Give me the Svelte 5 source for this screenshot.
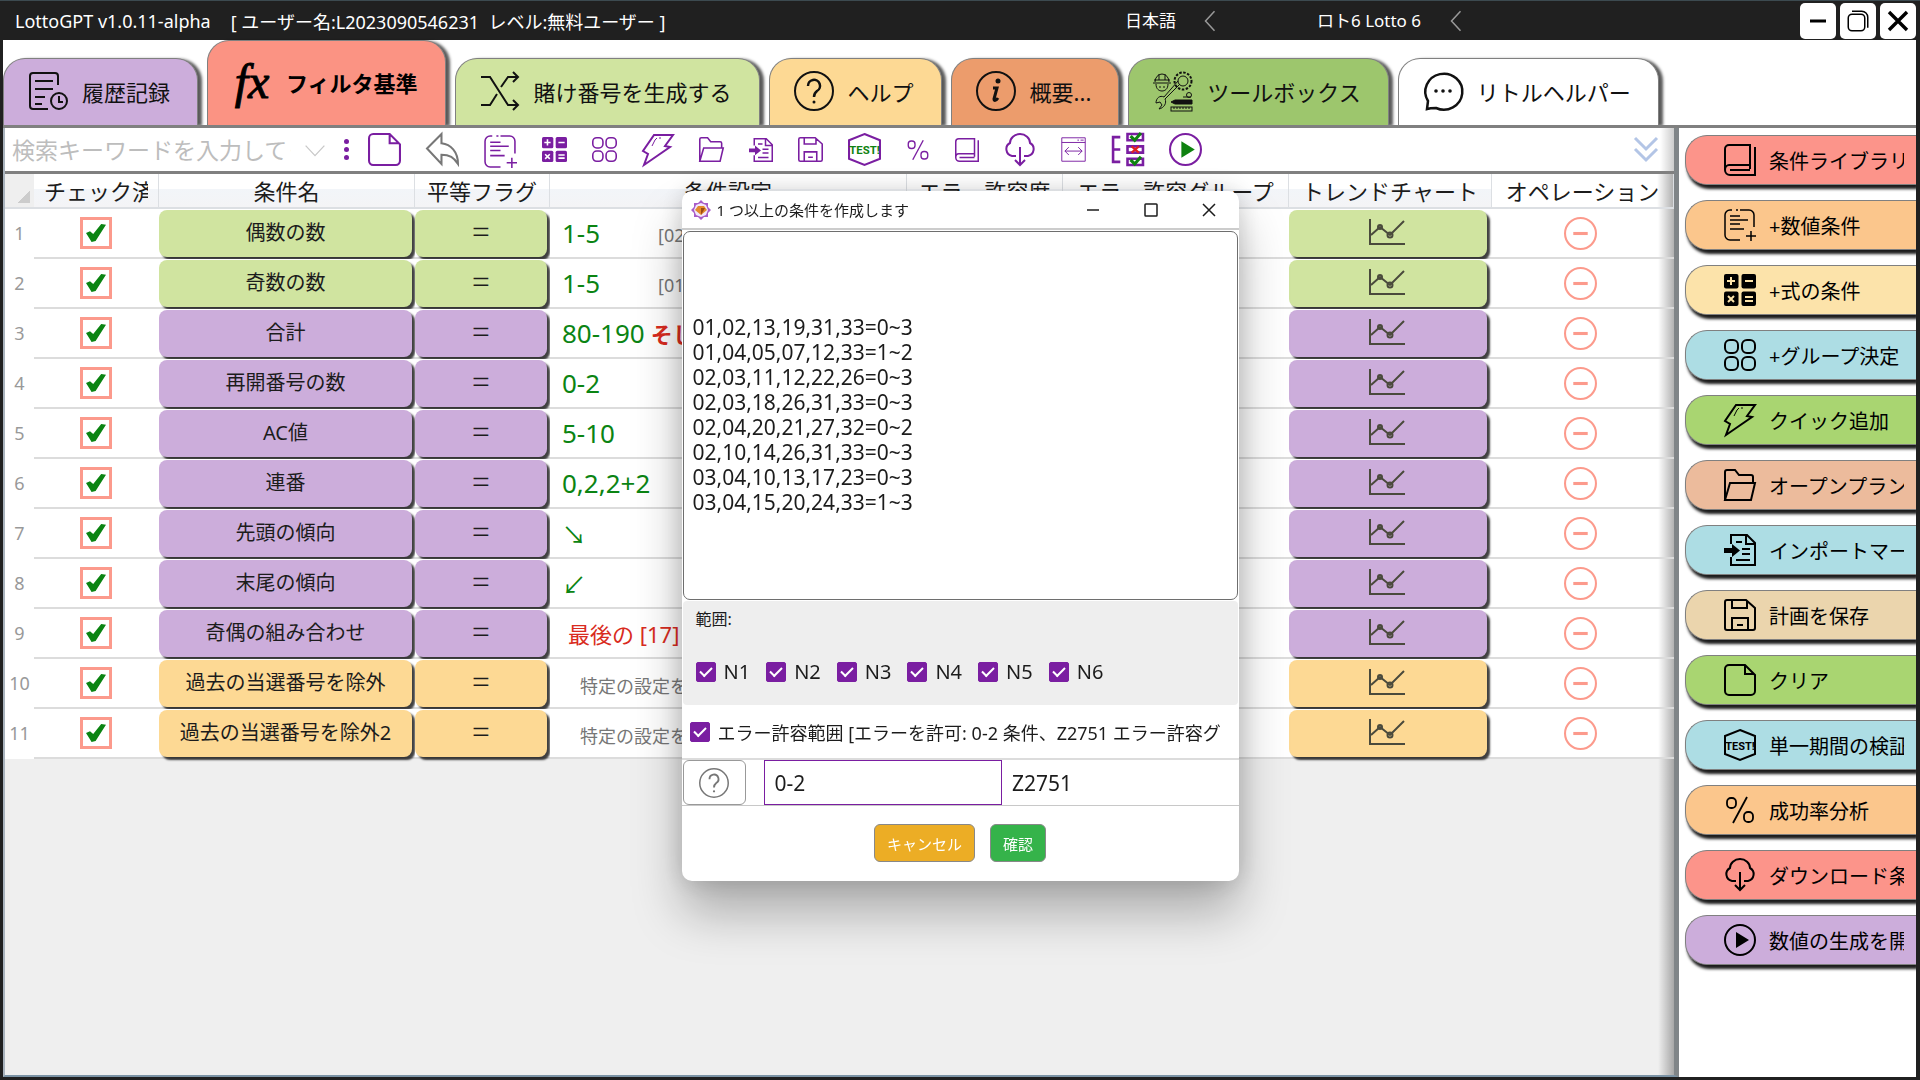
<script lang="ts">
  const icons: Record<string, string> = {
    history: `<path d="M30 14V5a3 3 0 0 0-3-3H5a3 3 0 0 0-3 3v30a3 3 0 0 0 3 3h15M7 10h18M7 18h18M7 26h10M7 33h7"/><circle cx="31" cy="30" r="8"/><path d="M31 25v6h4"/>`,
    shuffle: `<path d="M1 6h9l18 28h10M33 29l5 5-5 5M1 34h9l7-11M21 16l7-10h10M33 1l5 5-5 5"/>`,
    help: `<circle cx="20" cy="20" r="19"/><path d="M14 15a6 6 0 1 1 9 5c-2 1.5-3 3-3 6" stroke-width="2.5"/><circle cx="20" cy="31" r="1.5" fill="currentColor" stroke="none"/>`,
    info: `<circle cx="20" cy="20" r="19"/><path d="M17 17h4l-3 11c0 2 2 2 4-1" stroke-width="3"/><circle cx="22" cy="10" r="2.5" fill="currentColor" stroke="none"/>`,
    chat: `<path d="M4 38l1-8a18.500 18 0 1 1 8 7c-3 0-6 0-9 1z" stroke-width="2.5"/><g fill="currentColor" stroke="none"><circle cx="13" cy="20" r="1.8"/><circle cx="20" cy="20" r="1.8"/><circle cx="27" cy="20" r="1.8"/></g>`,
    tools: `<g stroke-width="1"><path d="M2 11a7 8 0 0 1 14 0M0 12h18M1 9h16M6 3v6M12 3v6M3 13c0 5 3 7 6 7s6-2 6-7M6 16h2M10 16h2"/><circle cx="30" cy="10" r="5"/><circle cx="30" cy="10" r="8.5" stroke-width="2" stroke-dasharray="2.5 1.5"/><path d="M27 13L12 28c2 4-1 9-6 10l3-4-2-3-4 1c0-5 4-8 8-6L25 10"/><rect x="18" y="36" width="21" height="4"/><path d="M21 36v2M24 36v2M27 36v2M30 36v2M33 36v2M36 36v2M30 26h8"/><circle cx="36" cy="24" r="2.500"/><path d="M18 31l4-2h17v4H22z" fill="currentColor"/></g>`,
    file: `<path d="M5 1h16l10 10v16a4 4 0 0 1-4 4H5a4 4 0 0 1-4-4V5a4 4 0 0 1 4-4zM21 1v9h9"/>`,
    undo: `<path d="M1 15L15 1v9c9 1 16 8 16 20-4-6-8-9-16-9v9z"/>`,
    note: `<g stroke-width="1.5"><path d="M12 1h2M16 1h9a5 5 0 0 1 5 5v12M8 1H6a5 5 0 0 0-5 5v20a5 5 0 0 0 5 5h10M6 7h10M6 11h18M6 15h10M6 20h14M27 22v10M22 27h10"/></g>`,
    calc: `<g fill="currentColor" stroke="none"><rect width="14.5" height="14.5" rx="2"/><rect x="17.5" width="14.5" height="14.5" rx="2"/><rect y="17.5" width="14.5" height="14.5" rx="2"/><rect x="17.5" y="17.5" width="14.5" height="14.5" rx="2"/></g><path stroke="var(--hole, #fff)" d="M3 7h8M7 3v8M21 7h8M4 22l6 6M10 22l-6 6M21 23h8M21 27h8"/>`,
    group: `<rect x="1" y="1" width="13" height="13" rx="5"/><rect x="18" y="1" width="13" height="13" rx="5"/><rect x="1" y="18" width="13" height="13" rx="5"/><rect x="18" y="18" width="13" height="13" rx="5"/>`,
    bolt: `<path d="M12 1h19l-8 11 5 1L2 31l4-11-5-3z"/><path d="M19 4h-2M15 4l-2 2-3 6" stroke-width="1"/>`,
    folder: `<path d="M1 31V3a2 2 0 0 1 2-2h8l4 5h12a2 2 0 0 1 2 2v6M1 31l5-17h25l-4 17z"/>`,
    input: `<path d="M7 10V1h16l8 8v22H7v-8M22 1v9h9M12 8h6M18 15h8M18 20h8M12 26h14"/><path d="M0 14h8v-4l8 6.5-8 6.5v-4H0z" fill="currentColor" stroke="none"/>`,
    save: `<path d="M3 1h19l9 8v20a2 2 0 0 1-2 2H3a2 2 0 0 1-2-2V3a2 2 0 0 1 2-2zM8 1v8h15V2M8 31V19h16v12M13 26h6"/>`,
    test: `<path d="M16 1l15 6v18l-15 6-15-6V7z"/><text x="16" y="20.5" text-anchor="middle" font-family="Liberation Sans Narrow, Roboto, sans-serif" font-size="11" font-weight="700" fill="var(--accent, currentColor)" stroke="none">TEST!</text>`,
    percent: `<g stroke-width="1.8"><rect x="3" y="4" width="9" height="10" rx="4"/><rect x="20" y="18" width="9" height="10" rx="4"/><path d="M23 3L9 29"/></g>`,
    book: `<path d="M5 1h21v20H5c-2 0-4 2-4 5V5a4 4 0 0 1 4-4zM1 26a5 5 0 0 0 5 5h25V3M6 26h20M26 21v4"/>`,
    cloud: `<path d="M12 22H8a7 7 0 0 1-2-13 10 9 0 0 1 20 0 7 7 0 0 1-2 13h-4M16 13v18M11 26l5 5 5-5"/>`,
    width: `<g stroke-width="1.2"><path d="M1 1h30v30H1zM1 7h30M21 4h2M25 4h4M5 18h22M10 13l-5 5 5 5M22 13l5 5-5 5"/></g>`,
    checklist: `<path d="M9 4H2v24h7M2 16h7" stroke-width="2.5"/><path d="M16 1h15v6H16zM16 13h15v6H16zM16 25h15v6H16z" stroke-width="2.5"/><path d="M19 3l4 4 6-7M19 26l4 4 6-7" stroke="#0f8210" stroke-width="3"/><path d="M20 13l7 6M27 13l-7 6" stroke="#e02020"/>`,
    play: `<circle cx="16" cy="16" r="15"/><path d="M12 8l13 8-13 8z" fill="var(--accent, currentColor)" stroke="none"/>`,
    chart: `<path d="M1 2v25h35M2 18l9-8 10 8 14-14"/><circle cx="11" cy="10" r="2"/><circle cx="21" cy="18" r="2.5"/>`,
    minus: `<circle cx="16" cy="16" r="15"/><path d="M9 16h14" stroke-width="3"/>`,
    down: `<path d="M1 9l15 16L31 9"/>`,
    left: `<path d="M22 3L10 16l12 13"/>`,
    chevrons: `<path d="M5 4l11 11L27 4M5 15l11 11 11-11" stroke-width="3"/>`,
    line: `<path d="M8 16h16"/>`,
    square: `<rect x="8" y="8" width="16" height="16" rx="1"/>`,
    copy: `<rect x="3" y="7" width="22" height="22" rx="5"/><path d="M8 3h13a8 8 0 0 1 8 8v14"/>`,
    close: `<path d="M8 8l16 16M24 8L8 24"/>`,
  };

  const tabs = [
    { label: "履歴記録", icon: "history", color: "#ccaddb" },
    { label: "フィルタ基準", icon: "fx", color: "#fb9383", active: true },
    { label: "賭け番号を生成する", icon: "shuffle", color: "#d0e4a0" },
    { label: "ヘルプ", icon: "help", color: "#fdd994" },
    { label: "概要...", icon: "info", color: "#ec9c6c" },
    { label: "ツールボックス", icon: "tools", color: "#9dc66d" },
    { label: "リトルヘルパー", icon: "chat", color: "#ffffff" },
  ];

  const tools = [
    { icon: "file", size: 33, label: "クリア" },
    { icon: "undo", size: 33, label: "元に戻す" },
    { icon: "note", size: 33, label: "数値条件" },
    { icon: "calc", size: 25, label: "式の条件" },
    { icon: "group", size: 25, label: "グループ決定" },
    { icon: "bolt", size: 32, label: "クイック追加" },
    { icon: "folder", size: 25, label: "開く" },
    { icon: "input", size: 24, label: "インポート" },
    { icon: "save", size: 25, label: "保存" },
    { icon: "test", size: 33, label: "検証" },
    { icon: "percent", size: 24, label: "成功率分析" },
    { icon: "book", size: 24, label: "条件ライブラリ" },
    { icon: "cloud", size: 32, label: "ダウンロード" },
    { icon: "width", size: 25, label: "列幅" },
    { icon: "checklist", size: 33, label: "チェック" },
    { icon: "play", size: 33, label: "生成を開始" },
  ];

  const columns = ["チェック済", "条件名", "平等フラグ", "条件設定", "エラー許容度", "エラー許容グループ", "トレンドチャート", "オペレーション"];

  const GREEN = "#d0e4a0";
  const PURPLE = "#ccaddb";
  const YELLOW = "#fdd994";

  let rows = $state([
    { name: "偶数の数", color: GREEN, value: "1-5", note: "[02", checked: true },
    { name: "奇数の数", color: GREEN, value: "1-5", note: "[01", checked: true },
    { name: "合計", color: PURPLE, value: "80-190", extra: "そして", checked: true },
    { name: "再開番号の数", color: PURPLE, value: "0-2", checked: true },
    { name: "AC値", color: PURPLE, value: "5-10", checked: true },
    { name: "連番", color: PURPLE, value: "0,2,2+2", checked: true },
    { name: "先頭の傾向", color: PURPLE, arrow: "↘", checked: true },
    { name: "末尾の傾向", color: PURPLE, arrow: "↙", checked: true },
    { name: "奇偶の組み合わせ", color: PURPLE, last: "最後の [17]", checked: true },
    { name: "過去の当選番号を除外", color: YELLOW, hint: "特定の設定を", checked: true },
    { name: "過去の当選番号を除外2", color: YELLOW, hint: "特定の設定を", checked: true },
  ]);

  const actions = [
    { label: "条件ライブラリ", icon: "book", color: "#fc948a" },
    { label: "+数値条件", icon: "note", color: "#fbc68c" },
    { label: "+式の条件", icon: "calc", color: "#fce3aa" },
    { label: "+グループ決定", icon: "group", color: "#addde4" },
    { label: "クイック追加", icon: "bolt", color: "#a9d571" },
    { label: "オープンプラン", icon: "folder", color: "#ecbb9c" },
    { label: "インポートマーク", icon: "input", color: "#addde4" },
    { label: "計画を保存", icon: "save", color: "#ebd5ad" },
    { label: "クリア", icon: "file", color: "#a9d571" },
    { label: "単一期間の検証", icon: "test", color: "#addde4" },
    { label: "成功率分析", icon: "percent", color: "#fbc68c" },
    { label: "ダウンロード条件", icon: "cloud", color: "#fc948a" },
    { label: "数値の生成を開始", icon: "play", color: "#ccaddb" },
  ];

  let ranges = $state(["N1", "N2", "N3", "N4", "N5", "N6"].map((label) => ({ label, checked: true })));
  let tolerance = $state(true);
  let limit = $state("0-2");
  let group = $state("Z2751");
  let conditions = $state(
    [
      "",
      "",
      "",
      "01,02,13,19,31,33=0~3",
      "01,04,05,07,12,33=1~2",
      "02,03,11,12,22,26=0~3",
      "02,03,18,26,31,33=0~3",
      "02,04,20,21,27,32=0~2",
      "02,10,14,26,31,33=0~3",
      "03,04,10,13,17,23=0~3",
      "03,04,15,20,24,33=1~3",
    ].join("\n"),
  );
</script>

{#snippet icon(name: string, size = 32, box = "0 0 32 32")}
  <svg class="icon" width={size} height={size} viewBox={box} aria-hidden="true">{@html icons[name]}</svg>
{/snippet}

<div class="window">
  <header class="titlebar">
    <span class="app-name">LottoGPT v1.0.11-alpha</span>
    <span class="user">[ ユーザー名:L2023090546231&nbsp; レベル:無料ユーザー ]</span>
    <label class="picker language">
      <select aria-label="言語"><option>日本語</option></select>
      {@render icon("left", 24)}
    </label>
    <label class="picker lottery">
      <select aria-label="くじ"><option>ロト6 Lotto 6</option></select>
      {@render icon("left", 24)}
    </label>
    <div class="window-buttons">
      <button aria-label="最小化">{@render icon("line")}</button>
      <button class="thin" aria-label="元のサイズに戻す">{@render icon("copy", 24)}</button>
      <button aria-label="閉じる">{@render icon("close", 36)}</button>
    </div>
  </header>

  <nav class="tabs">
    {#each tabs as tab}
      <button class="tab" class:active={tab.active} style="background-color: {tab.color}">
        {#if tab.icon === "fx"}
          <span class="fx" aria-hidden="true">fx</span>
        {:else}
          {@render icon(tab.icon, 40, "0 0 40 40")}
        {/if}
        {tab.label}
      </button>
    {/each}
  </nav>

  <div class="body">
    <main>
      <div class="toolbar">
        <div class="search">
          <input type="text" placeholder="検索キーワードを入力してください" aria-label="検索" />
          {@render icon("down", 20)}
        </div>
        <button class="dots" aria-label="メニュー"><i></i><i></i><i></i></button>
        <div class="tools">
          {#each tools as tool}
            <button class={tool.icon} aria-label={tool.label}>{@render icon(tool.icon, tool.size)}</button>
          {/each}
        </div>
        <button class="more" aria-label="もっと見る">{@render icon("chevrons", 32)}</button>
      </div>

      <table>
        <colgroup>
          <col class="c-index" /><col class="c-check" /><col class="c-name" /><col class="c-flag" /><col />
          <col class="c-error" /><col class="c-group" /><col class="c-trend" /><col class="c-op" />
        </colgroup>
        <thead>
          <tr>
            <th class="corner" aria-label="行"></th>
            {#each columns as column}
              <th><div>{column}</div></th>
            {/each}
          </tr>
        </thead>
        <tbody>
          {#each rows as row, i}
            <tr>
              <td class="index">{i + 1}</td>
              <td><input class="tick" type="checkbox" aria-label={row.name} bind:checked={row.checked} /></td>
              <td><button class="cell" style="background-color: {row.color}">{row.name}</button></td>
              <td><button class="cell flag" style="background-color: {row.color}">=</button></td>
              <td>
                <div class="setting">
                  {#if row.value}<span class="value" class:short={row.note}>{row.value}</span>{/if}
                  {#if row.note}<span class="note">{row.note}</span>{/if}
                  {#if row.extra}<span class="extra">{row.extra}</span>{/if}
                  {#if row.arrow}<span class="arrow">{row.arrow}</span>{/if}
                  {#if row.last}<span class="last">{row.last}</span>{/if}
                  {#if row.hint}<span class="hint">{row.hint}</span>{/if}
                </div>
              </td>
              <td></td>
              <td></td>
              <td>
                <button class="cell trend" style="background-color: {row.color}" aria-label="トレンドチャート">
                  <svg class="icon" width="40" height="28" viewBox="-1 0 40 28">{@html icons.chart}</svg>
                </button>
              </td>
              <td><button class="remove" aria-label="削除">{@render icon("minus", 33)}</button></td>
            </tr>
          {/each}
        </tbody>
      </table>
    </main>

    <aside>
      {#each actions as action}
        <button class="action" style="background-color: {action.color}; --hole: {action.color}">
          {@render icon(action.icon)}
          <span>{action.label}</span>
        </button>
      {/each}
    </aside>
  </div>
</div>

<div class="overlay">
  <div class="dialog" role="dialog" aria-labelledby="dialog-title">
    <div class="dialog-title">
      <svg width="20" height="20" viewBox="0 0 20 20" aria-hidden="true">
        <path d="M10 0l3 3h4v4l3 3-3 3v4h-4l-3 3-3-3H3v-4l-3-3 3-3V3h4z" fill="#a85cc8" />
        <path d="M10 3l5 2 2 5-2 5-5 2-5-2-2-5 2-5z" fill="#f3e6fa" />
        <path d="M7 6h6l3 4-6 5-6-5z" fill="#e38b2c" />
        <path d="M10 8h4l-4 7z" fill="#9c4a12" />
      </svg>
      <h2 id="dialog-title">1 つ以上の条件を作成します</h2>
      <button aria-label="最小化">{@render icon("line", 24)}</button>
      <button aria-label="最大化">{@render icon("square", 24)}</button>
      <button aria-label="閉じる">{@render icon("close", 24)}</button>
    </div>
    <textarea aria-label="条件" spellcheck="false" bind:value={conditions}></textarea>
    <fieldset>
      <legend>範囲:</legend>
      <div class="ranges">
        {#each ranges as range}
          <label><input class="box" type="checkbox" bind:checked={range.checked} />{range.label}</label>
        {/each}
      </div>
    </fieldset>
    <label class="tolerance">
      <input class="box" type="checkbox" bind:checked={tolerance} />
      <span>エラー許容範囲 [エラーを許可: 0-2 条件、Z2751 エラー許容グ</span>
    </label>
    <div class="fields">
      <button class="question" aria-label="ヘルプ">{@render icon("help", 30, "0 0 40 40")}</button>
      <input class="limit" type="text" aria-label="エラー許容範囲" bind:value={limit} />
      <input type="text" aria-label="エラー許容グループ" bind:value={group} />
    </div>
    <div class="dialog-buttons">
      <button class="cancel">キャンセル</button>
      <button class="confirm">確認</button>
    </div>
  </div>
</div>

<style>
  :global(body) {
    background: #202020;
  }
  .window,
  .overlay {
    font-family: "Noto Sans", "Noto Sans CJK JP", sans-serif;
    color: #1c1c1c;
  }
  .window {
    display: flex;
    flex-direction: column;
    box-sizing: border-box;
    min-height: 100vh;
    padding: 0 4px 3px 3px;
    background: #202020;
    border-top: 1px solid #3c4a50;
  }
  button,
  input,
  select,
  textarea {
    box-sizing: border-box;
    margin: 0;
    padding: 0;
    border: 0;
    background: none;
    font: inherit;
    color: inherit;
    outline: none;
  }
  button {
    display: flex;
    align-items: center;
    justify-content: center;
  }
  .icon {
    flex: none;
    fill: none;
    stroke: currentColor;
    stroke-width: 2;
    overflow: visible;
  }

  .titlebar {
    display: flex;
    align-items: center;
    height: 39px;
    padding-left: 12px;
    font-size: 18px;
    color: #fff;
    white-space: nowrap;
  }
  .user {
    flex: 1;
    padding-left: 20px;
  }
  .picker {
    display: flex;
    align-items: center;
    gap: 22px;
    font-size: 17px;
  }
  .picker .icon {
    color: #999;
  }
  .language {
    width: 192px;
  }
  .lottery {
    width: 483px;
  }
  select {
    appearance: none;
  }
  .window-buttons {
    display: flex;
    gap: 4px;
  }
  .window-buttons button {
    width: 36px;
    height: 36px;
    border-radius: 5px;
    background: #fff;
    color: #000;
  }
  .window-buttons .icon {
    stroke-width: 3;
  }
  .window-buttons .thin .icon {
    stroke-width: 2;
  }

  .tabs {
    display: flex;
    align-items: flex-end;
    gap: 9px;
    height: 85px;
    border-bottom: 3px solid #808080;
    background: #fff;
  }
  .tab {
    gap: 14px;
    height: 67px;
    padding: 0 27px 2px 24px;
    border: 1px solid #808080;
    border-bottom: 0;
    border-radius: 22px 22px 0 0;
    box-shadow: 4px 1px 3px rgba(0, 0, 0, 0.65);
    clip-path: inset(-4px -8px 0 -4px);
    font-size: 22px;
    white-space: nowrap;
    color: #111;
  }
  .tab.active {
    height: 85px;
    font-weight: 700;
    color: #000;
  }
  .fx {
    width: 40px;
    font-family: "Liberation Serif", serif;
    font-size: 48px;
    font-style: italic;
    font-weight: 400;
    line-height: 40px;
    -webkit-text-stroke: 1px #000;
  }

  .body {
    display: flex;
    flex: 1;
    background: #fff;
  }
  main {
    flex: 1;
    min-width: 0;
    border-left: 2px solid #a9b3bd;
    border-right: 5px solid #808588;
    border-bottom: 2px solid #7b93a5;
    background: linear-gradient(to left, rgba(0, 0, 0, 0.3), transparent 16px) #efefef;
  }
  .toolbar {
    display: flex;
    align-items: center;
    height: 43px;
    border-bottom: 3px solid #808080;
    background: linear-gradient(to left, rgba(0, 0, 0, 0.2), transparent 14px) #fff;
    color: #7a1ea1;
  }
  .search {
    display: flex;
    align-items: center;
    gap: 14px;
    width: 330px;
    color: #c8c8c8;
  }
  .search input {
    width: 286px;
    padding-left: 7px;
    font-size: 23px;
  }
  .search input::placeholder {
    color: #bdbdbd;
    opacity: 1;
  }
  .dots {
    flex-direction: column;
    gap: 3px;
    width: 22px;
  }
  .dots i {
    width: 5px;
    height: 5px;
    border-radius: 50%;
    background: #7a1ea1;
  }
  .tools {
    display: flex;
    align-items: center;
    gap: 25px;
    margin-left: 11px;
  }
  .tools button {
    color: #7a1ea1;
    --accent: #0f8210;
  }
  .tools .undo {
    color: #777;
  }
  .more {
    margin-left: auto;
    margin-right: 12px;
    color: #b3c5e6;
  }

  table {
    width: 100%;
    border-collapse: separate;
    border-spacing: 0;
    table-layout: fixed;
  }
  .c-index {
    width: 29px;
  }
  .c-check {
    width: 125px;
  }
  .c-name {
    width: 256px;
  }
  .c-flag {
    width: 135px;
  }
  .c-error {
    width: 156px;
  }
  .c-group {
    width: 226px;
  }
  .c-trend {
    width: 203px;
  }
  .c-op {
    width: 182px;
  }
  th {
    box-sizing: border-box;
    height: 35px;
    padding: 0 10px;
    border-right: 1px solid #dcdfe3;
    border-bottom: 2px solid #dcdfe3;
    background: linear-gradient(#fff 45%, #f2f5f9 45%, #f4f4f6);
    font-size: 22px;
    font-weight: 400;
    line-height: 32px;
  }
  th:last-child,
  tbody td:last-child {
    background: linear-gradient(to left, rgba(0, 0, 0, 0.3), transparent 16px) #fff;
  }
  th div {
    overflow: hidden;
    height: 32px;
    white-space: nowrap;
  }
  th.corner {
    border-right: 0;
    background: linear-gradient(135deg, transparent 50%, #ccc 50%) right 4px bottom 4px / 12px 12px no-repeat #efefef;
  }
  td {
    box-sizing: border-box;
    height: 50px;
    padding: 0;
    border-bottom: 2px solid #dcdcdc;
    background: #fff;
  }
  .index {
    border-color: #fff;
    font-size: 18px;
    color: #999;
    text-align: center;
  }
  .tick {
    display: block;
    width: 32px;
    height: 32px;
    margin-left: 46px;
    border: 3px solid #fc9a8c;
    appearance: none;
  }
  .tick:checked::after {
    content: "";
    display: block;
    width: 20px;
    height: 18px;
    margin: 4px 3px;
    background: #0b8413;
    clip-path: polygon(0 50%, 20% 40%, 36% 56%, 76% 0, 100% 4%, 48% 94%, 28% 100%);
  }
  .cell {
    width: calc(100% - 3px);
    height: 47px;
    padding-bottom: 4px;
    border-radius: 8px;
    box-shadow: 3px 3px 2px rgba(0, 0, 0, 0.75);
    font-size: 20px;
    white-space: nowrap;
  }
  .flag {
    font-size: 32px;
    font-weight: 300;
    line-height: 40px;
  }
  .trend {
    width: calc(100% - 5px);
    color: #4a4a3c;
  }
  .remove {
    margin-left: 72px;
    color: #fc9a8c;
  }
  .setting {
    display: flex;
    align-items: center;
    height: 48px;
    padding-left: 12px;
    overflow: hidden;
    white-space: nowrap;
  }
  .value {
    font-size: 26px;
    color: #0b8413;
  }
  .short {
    width: 96px;
  }
  .note,
  .hint {
    padding-top: 4px;
    font-size: 18px;
    color: #777;
  }
  .hint {
    padding-left: 18px;
  }
  .extra {
    padding-left: 6px;
    font-size: 22px;
    font-weight: 700;
    color: #d92b20;
  }
  .arrow {
    font-size: 24px;
    color: #0b8413;
  }
  .last {
    padding-left: 6px;
    font-size: 22px;
    color: #d92b20;
  }

  aside {
    display: flex;
    flex-direction: column;
    gap: 15px;
    width: 231px;
    padding: 7px 0 0 6px;
    overflow: hidden;
  }
  .action {
    justify-content: flex-start;
    gap: 13px;
    width: 100%;
    height: 50px;
    padding: 0 12px 0 38px;
    border: 1px solid #808080;
    border-right: 0;
    border-radius: 22px 0 0 22px;
    box-shadow: 2px 4px 3px #1c1c1c;
    font-size: 20px;
    color: #000;
  }
  .action span {
    flex: 1;
    overflow: hidden;
    white-space: nowrap;
    text-align: left;
  }

  .overlay {
    position: fixed;
    inset: 0;
    display: flex;
    align-items: center;
    justify-content: center;
    padding-bottom: 8px;
    pointer-events: none;
  }
  .dialog {
    width: 557px;
    border-radius: 10px;
    overflow: hidden;
    background: #fff;
    box-shadow:
      0 32px 50px rgba(0, 0, 0, 0.28),
      0 0 24px rgba(0, 0, 0, 0.16);
    pointer-events: auto;
  }
  .dialog-title {
    display: flex;
    align-items: center;
    height: 37px;
    padding: 0 1px 0 9px;
    border-bottom: 2px solid #ccc;
  }
  .dialog-title h2 {
    flex: 1;
    margin: 0;
    padding-left: 6px;
    font-size: 15px;
    font-weight: 400;
  }
  .dialog-title button {
    width: 58px;
    height: 36px;
  }
  textarea {
    display: block;
    width: calc(100% - 2px);
    height: 369px;
    margin: 1px;
    padding: 8px 9px;
    border: 1px solid #6e6e6e;
    border-radius: 7px;
    font-size: 21px;
    line-height: 25px;
    resize: none;
    overflow: hidden;
  }
  fieldset {
    height: 104px;
    margin: 0 1px;
    padding: 0 13px;
    border: 0;
    border-radius: 4px;
    background: #eee;
  }
  legend {
    float: left;
    width: 100%;
    padding: 6px 0 0;
    font-size: 16px;
    line-height: 24px;
  }
  .ranges {
    display: flex;
    gap: 16px;
    padding-top: 27px;
    clear: both;
  }
  .ranges label {
    display: flex;
    align-items: center;
    gap: 8px;
    font-size: 20px;
    line-height: 28px;
  }
  .box {
    flex: none;
    width: 20px;
    height: 20px;
    border-radius: 2px;
    border: 1px solid #7a1ea1;
    appearance: none;
  }
  .box:checked {
    background: #7a1ea1;
  }
  .box:checked::after {
    content: "";
    display: block;
    width: 12px;
    height: 7px;
    margin: 4px 3px;
    border: solid #fff;
    border-width: 0 0 2px 2px;
    box-sizing: border-box;
    transform: rotate(-45deg);
  }
  .tolerance {
    display: flex;
    align-items: center;
    gap: 8px;
    height: 53px;
    padding: 0 8px;
    border-bottom: 2px solid #dcdcdc;
    font-size: 18px;
  }
  .tolerance span {
    overflow: hidden;
    white-space: nowrap;
  }
  .fields {
    display: flex;
    height: 45px;
    padding-left: 1px;
    border-bottom: 1px solid #c8c8c8;
    font-size: 21px;
  }
  .question {
    width: 63px;
    margin-right: 18px;
    border: 1px solid #999;
    border-radius: 6px;
    color: #777;
  }
  .fields input {
    flex: 1;
    min-width: 0;
    padding-left: 10px;
  }
  .fields .limit {
    border: 1px solid #7a1ea1;
  }
  .dialog-buttons {
    display: flex;
    justify-content: center;
    gap: 15px;
    padding: 18px 0 19px;
  }
  .dialog-buttons button {
    height: 38px;
    padding: 0 12px;
    border: 1px solid #888;
    border-radius: 6px;
    font-size: 15px;
    color: #fff;
  }
  .cancel {
    background: #ecad25;
  }
  .confirm {
    background: #35b34a;
  }
</style>
